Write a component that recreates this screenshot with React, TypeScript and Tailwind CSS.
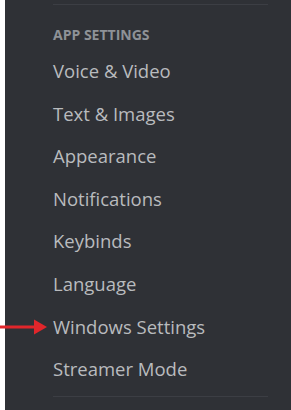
import React from "react";

const items = [
  "Voice & Video",
  "Text & Images",
  "Appearance",
  "Notifications",
  "Keybinds",
  "Language",
  "Windows Settings",
  "Streamer Mode",
];

export default function App() {
  return (
    <div className="flex h-[410px] w-[291px] bg-white overflow-hidden" style={{ fontFamily: '"Open Sans", "Noto Sans", sans-serif' }}>
      <div className="relative ml-[5px] flex-1 bg-[#2f3136] pl-[48px] pr-[23px]">
        <div className="mt-[4px] h-px bg-[#3c3e44]" />
        <div className="mt-[21px] text-[14px] font-bold uppercase leading-[17px] text-[#8e9297]">App Settings</div>
        <div className="mt-[7px] flex flex-col">
          {items.map((t) => (
            <div key={t} className="relative flex h-[42.6px] items-center text-[18.5px] font-medium leading-none text-[#b9bbbe]">
              {t === "Windows Settings" && (
                <svg className="absolute left-[-53px] top-1/2 -translate-y-1/2" width="48" height="18" viewBox="0 0 48 18">
                  <rect x="0" y="7.5" width="38" height="3" fill="#e1262b" />
                  <polygon points="34,1.5 47,9 34,16.5" fill="#e1262b" />
                </svg>
              )}
              {t}
            </div>
          ))}
        </div>
        <div className="mt-[5px] h-px bg-[#3c3e44]" />
      </div>
    </div>
  );
}
